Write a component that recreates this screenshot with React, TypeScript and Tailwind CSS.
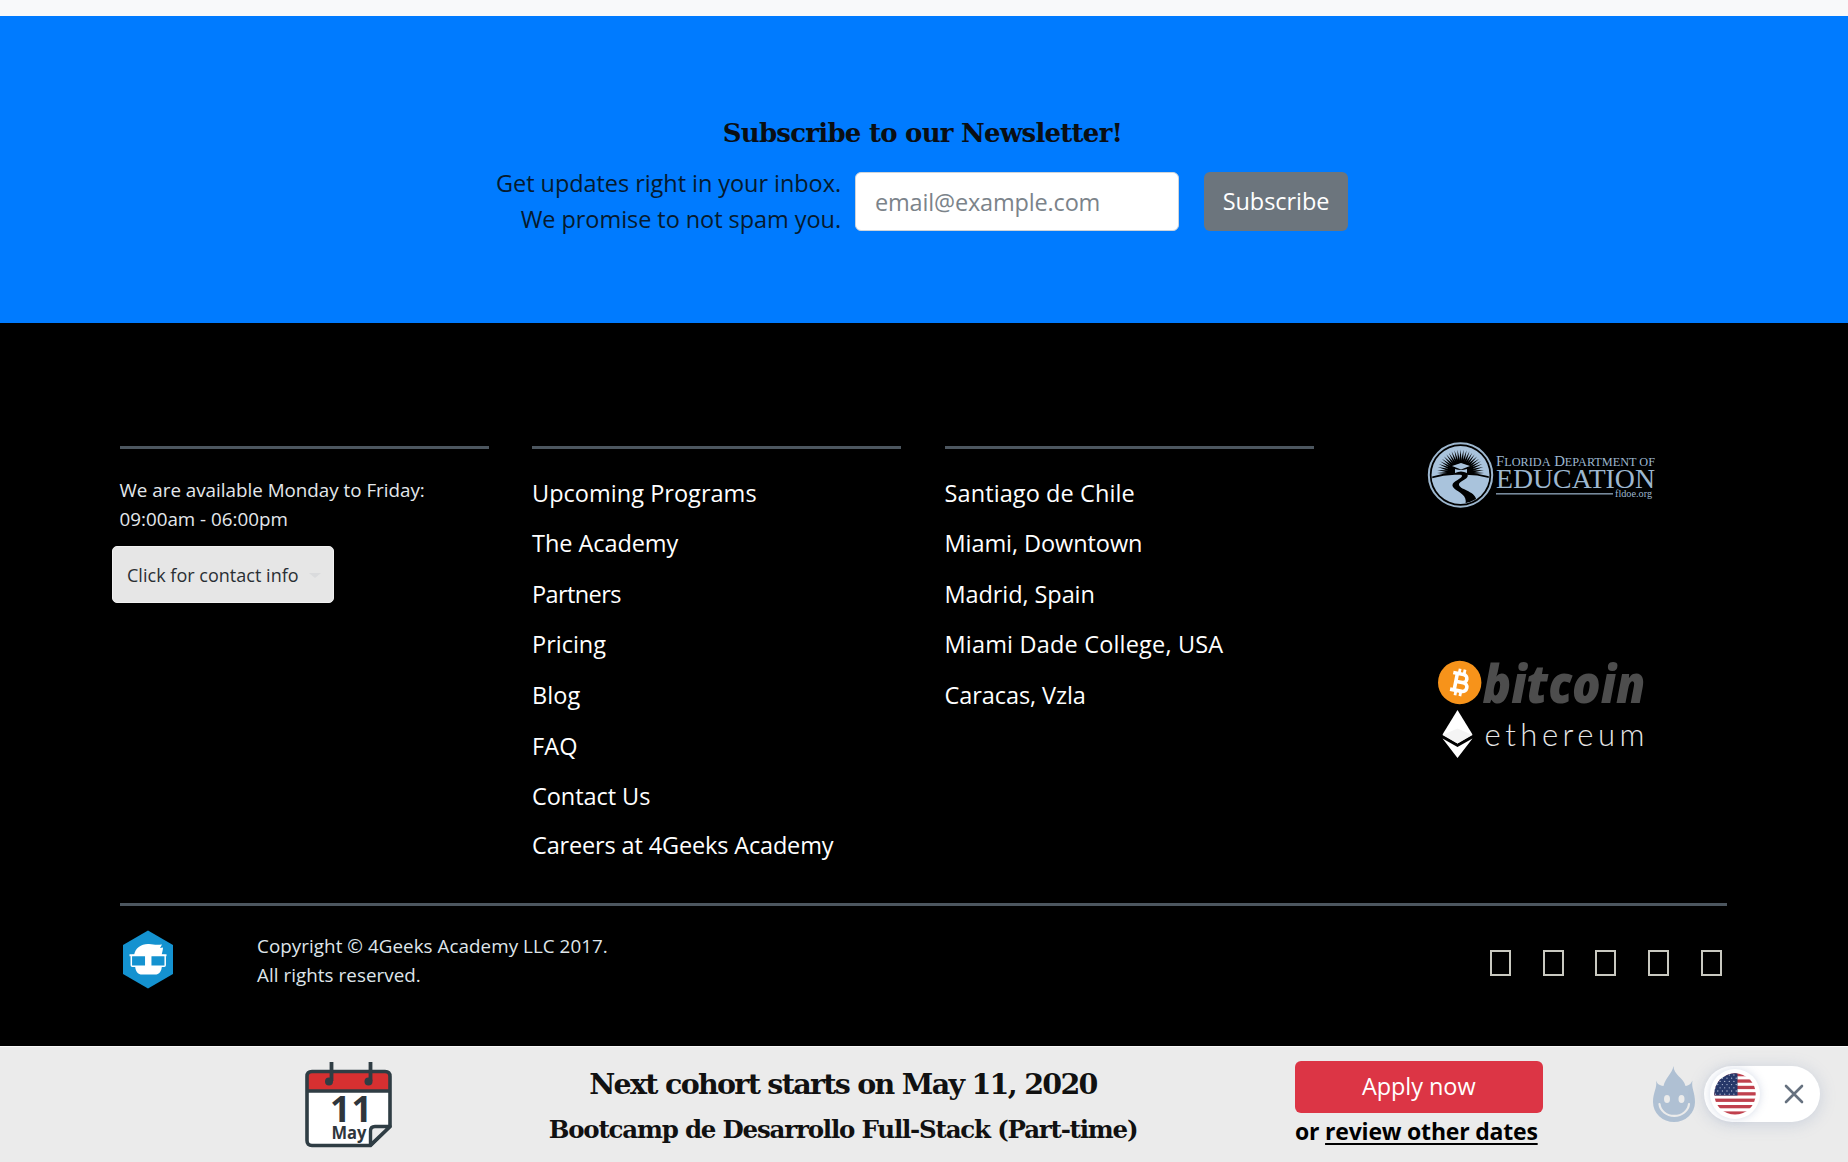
import React from "react";

const programs = [
  { label: "Upcoming Programs", cls: "tracking-[0.03px]" },
  { label: "The Academy", cls: "tracking-[-0.06px]" },
  { label: "Partners", cls: "tracking-[-0.6px]" },
  { label: "Pricing", cls: "tracking-[0px]" },
  { label: "Blog", cls: "tracking-[0.1px]" },
  { label: "FAQ", cls: "tracking-[0.1px]" },
  { label: "Contact Us", cls: "tracking-[-0.05px]" },
  { label: "Careers at 4Geeks Academy", cls: "tracking-[-0.15px] -mt-[1.5px]" },
];

const locations = [
  { label: "Santiago de Chile", cls: "tracking-[0.1px]" },
  { label: "Miami, Downtown", cls: "tracking-[-0.07px]" },
  { label: "Madrid, Spain", cls: "tracking-[-0.08px]" },
  { label: "Miami Dade College, USA", cls: "tracking-[0.18px]" },
  { label: "Caracas, Vzla", cls: "tracking-[-0.07px]" },
];

function LinkList({ items }: { items: { label: string; cls: string }[] }) {
  return (
    <ul className="border-t-[3px] border-[#4c565f] pt-[18.600px] text-[23.5px] leading-[50.6px] text-white">
      {items.map((item) => (
        <li key={item.label} className={`whitespace-nowrap ${item.cls}`}>
          <a href="#">{item.label}</a>
        </li>
      ))}
    </ul>
  );
}

function EducationLogo() {
  const rays = Array.from({ length: 25 }, (_, i) => -180 + i * 7.5);
  return (
    <svg width="230" height="68" viewBox="0 0 230 68" className="block">
      <defs>
        <clipPath id="seal">
          <circle cx="33.500" cy="34" r="28.5" />
        </clipPath>
      </defs>
      <circle cx="33.5" cy="34" r="31.7" fill="#000" stroke="#9db7cf" strokeWidth="2" />
      <circle cx="33.5" cy="34" r="29" fill="#a9c3dc" />
      <g clipPath="url(#seal)">
        {rays.map((a) => (
          <path key={a} d="M8 -1.5 L23.500 0 L8 1.5Z" fill="#000" transform={`translate(33.5 32) rotate(${a})`} />
        ))}
        <path d="M22 33a11.500 11.500 0 0 1 23 0z" fill="#000" />
        <path d="M3 37q15-5 30-4 16-1 32 4" fill="none" stroke="#000" strokeWidth="1.6" />
        <path d="M25 25l9-3 9 3-9 3.500zM28 28q6 2 12 0v4q-6-3-12 0z" fill="#a9c3dc" />
        <path d="M33 33c8 4-11 7-7 13 3 5 16 7 12 18h11c4-14-15-14-17-20-1-4 12-6 8-11z" fill="#000" />
      </g>
      <g fill="#9db7cf" fontFamily="'Liberation Serif', serif">
        <text x="69" y="24.500" fontSize="14.500" textLength="159" lengthAdjust="spacingAndGlyphs">
          F<tspan fontSize="12">LORIDA</tspan> D<tspan fontSize="12">EPARTMENT OF</tspan>
        </text>
        <text x="69" y="47" fontSize="27" textLength="159" lengthAdjust="spacingAndGlyphs">EDUCATION</text>
        <rect x="69" y="52" width="117" height="1.600" opacity="0.75" />
        <text x="188" y="56" fontSize="10.500" textLength="37" lengthAdjust="spacingAndGlyphs">fldoe.org</text>
      </g>
    </svg>
  );
}

function CryptoLogos() {
  return (
    <svg width="212" height="104" viewBox="0 0 212 104" className="block">
      <circle cx="21.700" cy="23.500" r="21.700" fill="#f7931a" />
      <g transform="translate(22.500 23.500) rotate(11)" fill="none" stroke="#fff" strokeWidth="3.600">
        <path d="M-9 -8.500H1.500a4 4 0 0 1 0 8.200H-4M-4.800 -8.500V8.500M-9 8.500H2.800a4.400 4.400 0 0 0 0-8.800H-4" />
        <path d="M-3 -13.500V-8M2 -13.500V-8M-3 8V13.500M2 8V13.500" strokeWidth="2.800" />
      </g>
      <text x="44.500" y="43.500" fontFamily="'Open Sans', sans-serif" fontWeight="800" fontStyle="italic" fontSize="53" fill="#4d4d4d" textLength="163" lengthAdjust="spacingAndGlyphs">
        bitcoin
      </text>
      <path d="M19.500 51L34.500 75.500 19.500 84.500 4.500 75.500z" fill="#fff" />
      <path d="M4.500 79.500L19.500 88 34.500 79.500 19.500 99z" fill="#fff" />
      <path d="M4.500 76L19.500 69.500 34.500 76 19.500 84.500z" fill="#f4f4f4" />
      <text x="46.500" y="86.500" fontFamily="Lato, sans-serif" fontWeight="300" fontSize="31" fill="#e6e6e6" textLength="160">
        ethereum
      </text>
    </svg>
  );
}

function GeekBadge() {
  return (
    <svg width="52" height="60" viewBox="0 0 52 60" className="block">
      <path d="M26 .5L51 15v29L26 58.500 1 44V15z" fill="#1492d0" />
      <path d="M12 25.500c1-8 8-12 15-11.500 5 .800 8 1 13 .500l-2 3.500 3-.500c0 3-1 5-1.500 8z" fill="#fff" />
      <path d="M13 34h27c0 8-3 10.500-7 10.500H20c-4 0-7-2.500-7-10.500z" fill="#fff" />
      <rect x="23" y="24.500" width="6" height="12" fill="#fff" />
      <path d="M7.500 25.300H44.500" stroke="#fff" strokeWidth="2" />
      <rect x="9.300" y="25.500" width="14.500" height="10.800" rx="1" fill="#1492d0" stroke="#fff" strokeWidth="1.500" />
      <rect x="28.700" y="25.500" width="14.500" height="10.800" rx="1" fill="#1492d0" stroke="#fff" strokeWidth="1.500" />
    </svg>
  );
}

function CalendarIcon() {
  return (
    <svg width="88" height="88" viewBox="0 0 88 88" className="block">
      <path d="M7 10.500h73q5 0 5 5v50L65.500 84.500H7q-5 0-5-5v-64q0-5 5-5z" fill="#fff" />
      <path d="M3 29V15.500q0-4 4-4h73q4 0 4 4V29z" fill="#d63031" />
      <path d="M7 10.500h73q5 0 5 5v50L65.500 84.500H7q-5 0-5-5v-64q0-5 5-5zM2 30h83" fill="none" stroke="#2f3d44" strokeWidth="3.600" strokeLinejoin="round" />
      <path d="M65.500 84V70q0-4.500 4.500-4.500h15z" fill="#ebebeb" stroke="#2f3d44" strokeWidth="3.400" strokeLinejoin="round" />
      <path d="M26.500 1v19M65.500 1v19" stroke="#2f3d44" strokeWidth="3.800" />
      <circle cx="24" cy="20.500" r="4" fill="#2f3d44" />
      <circle cx="63.500" cy="20.500" r="4" fill="#2f3d44" />
      <g fill="#2f363c" fontFamily="'Open Sans', sans-serif" fontWeight="700">
        <text x="25" y="60.500" fontSize="36" textLength="42">11</text>
        <text x="26.500" y="77.500" fontSize="17" textLength="35" lengthAdjust="spacingAndGlyphs">May</text>
      </g>
    </svg>
  );
}

function FlameIcon() {
  return (
    <svg width="42" height="56" viewBox="0 0 42 56" className="block">
      <path d="M20.500 0c-1.500 8-8 11.500-10 20C6 19.500 4 17.500 3 14.500 4.500 22 0 26 0 36a21 20 0 0 0 42 0c0-10-4-14-2.500-21.500-1.500 3-3 5-7 5.500C30.500 11.500 20.500 9 20.500 0z" fill="#afc0d3" />
      <ellipse cx="14" cy="33" rx="3" ry="4" fill="#ebebeb" />
      <ellipse cx="28.500" cy="33" rx="3" ry="4" fill="#ebebeb" />
      <path d="M6.500 38a14.800 13 0 0 0 29.500 0" fill="none" stroke="#ebebeb" strokeWidth="2.200" strokeLinecap="round" />
    </svg>
  );
}

function FlagIcon() {
  const stars = Array.from({ length: 35 }, (_, i) => ({
    x: 1.5 + (i % 5) * 4.6 + (Math.floor(i / 5) % 2) * 2.3,
    y: 2 + Math.floor(i / 5) * 3.2,
  }));
  return (
    <svg width="42" height="42" viewBox="0 0 42 42" className="block">
      <defs>
        <clipPath id="flag">
          <circle cx="21" cy="21" r="20.700" />
        </clipPath>
      </defs>
      <g clipPath="url(#flag)">
        <rect width="42" height="42" fill="#fff" />
        {[0, 6.4, 12.8, 19.2, 25.6, 32, 38.4].map((y) => (
          <rect key={y} y={y} width="42" height="3.300" fill="#c0404d" />
        ))}
        <rect width="23.500" height="22.500" fill="#273869" />
        {stars.map((s, i) => (
          <circle key={i} cx={s.x} cy={s.y} r="0.650" fill="#b9c2d8" />
        ))}
      </g>
    </svg>
  );
}

export default function App() {
  return (
    <div className="flex h-[1162px] w-[1848px] flex-col overflow-hidden bg-black font-['Open_Sans',sans-serif]">
      <div className="h-[15.5px] shrink-0 bg-[#f8f9fa]" />

      <section className="h-[307.500px] shrink-0 bg-[#007bff] pt-[97px] text-[#061a2e]">
        <h2 className="pr-[3px] text-center font-['DejaVu_Serif',serif] text-[26px] leading-[40px] font-bold tracking-[-0.75px] text-[#0a0f14]">
          Subscribe to our Newsletter!
        </h2>
        <form className="mt-[11.500px] flex h-[74px] items-center text-[23.500px] tracking-[-0.06px]">
          <p className="w-[841px] shrink-0 text-right leading-[36px]">
            Get updates right in your inbox.
            <br />
            We promise to not spam you.
          </p>
          <input
            placeholder="email@example.com"
            className="ml-[14px] h-[59px] w-[324px] rounded-[6px] border border-[#ced4da] bg-white px-[19px] pt-[2px] tracking-[-0.17px] placeholder:text-[#7b838a]"
          />
          <button type="button" className="ml-[25px] h-[59px] w-[144px] rounded-[6px] bg-[#6c757d] pt-[2px] text-white">
            Subscribe
          </button>
        </form>
      </section>

      <footer className="h-[723px] shrink-0 bg-black pt-[123px] pl-[119.500px]">
        <div className="grid h-[457px] grid-cols-[369px_369px_369px_1fr] gap-x-[43.500px]">
          <div className="flex flex-col items-start border-t-[3px] border-[#4c565f] pt-[27px]">
            <p className="text-[18.800px] leading-[29px] whitespace-nowrap tracking-[0px] text-[#e4e8ec]">
              We are available Monday to Friday:
              <br />
              09:00am - 06:00pm
            </p>
            <button
              type="button"
              className="mt-[12px] -ml-[7.500px] flex h-[57px] w-[222px] items-center rounded-[5px] border border-[#f1f1f1] bg-[#e6e6e6] pt-[2px] pl-[14px] text-[18px] tracking-[0.02px] whitespace-nowrap text-[#2a2f34]"
            >
              Click for contact info
              <span className="ml-[10px] border-x-[6px] border-t-[5px] border-x-transparent border-t-[#dadbdd]" />
            </button>
          </div>
          <LinkList items={programs} />
          <LinkList items={locations} />
          <div>
            <div className="-mt-[5px] pl-[70px]">
              <EducationLogo />
            </div>
            <div className="mt-[150px] pl-[81px]">
              <CryptoLogos />
            </div>
          </div>
        </div>

        <div className="flex w-[1607px] items-start border-t-[3px] border-[#4c565f]">
          <div className="pt-[24px] pl-[2px]">
            <GeekBadge />
          </div>
          <p className="pt-[26px] pl-[83.500px] text-[18.800px] leading-[29px] whitespace-nowrap tracking-[0.06px] text-[#dfe5ea]">
            Copyright © 4Geeks Academy LLC 2017.
            <br />
            All rights reserved.
          </p>
          <div className="mt-[44px] mr-[5px] ml-auto flex gap-[31.600px]">
            {["facebook", "twitter", "instagram", "youtube", "linkedin"].map((name) => (
              <a key={name} aria-label={name} href="#" className="block h-[26px] w-[21px] border-2 border-[#c9c9c0]" />
            ))}
          </div>
        </div>
      </footer>

      <div className="flex h-[116px] shrink-0 items-start border-t border-[#fafafa] bg-[#ebebeb]">
        <div className="mt-[14px] ml-[305px]">
          <CalendarIcon />
        </div>
        <div className="ml-[130px] w-[640px] text-center font-['DejaVu_Serif',serif] font-bold whitespace-nowrap text-[#111]">
          <h3 className="mt-[17px] text-[28.500px] leading-[40px] tracking-[-1.700px]">Next cohort starts on May 11, 2020</h3>
          <h4 className="mt-[8px] text-[24.500px] leading-[36px] tracking-[-1.200px]">Bootcamp de Desarrollo Full-Stack (Part-time)</h4>
        </div>
        <div className="mt-[14px] ml-[132px] w-[247.500px]">
          <button type="button" className="block h-[52px] w-full rounded-[6px] bg-[#dc3545] text-[23.500px] tracking-[-0.06px] text-white">
            Apply now
          </button>
          <p className="text-[23px] leading-[36px] font-bold tracking-[-0.2px] whitespace-nowrap text-black">
            or{" "}
            <a href="#" className="underline decoration-2 underline-offset-[3px]">
              review other dates
            </a>
          </p>
        </div>
        <div className="mt-[19px] ml-[110px]">
          <FlameIcon />
        </div>
        <div className="mt-[19px] ml-[9px] flex h-[56px] w-[116px] items-center rounded-full bg-white shadow-[0_2px_16px_rgba(120,140,180,0.28)]">
          <div className="ml-[6px] rounded-full bg-white p-[4px] shadow-[0_0_8px_rgba(120,140,180,0.3)]">
            <FlagIcon />
          </div>
          <svg width="20" height="20" viewBox="0 0 20 20" className="ml-[24px]">
            <path d="M2 2l16 16M18 2L2 18" stroke="#66717f" strokeWidth="2.600" strokeLinecap="round" />
          </svg>
        </div>
      </div>
    </div>
  );
}
